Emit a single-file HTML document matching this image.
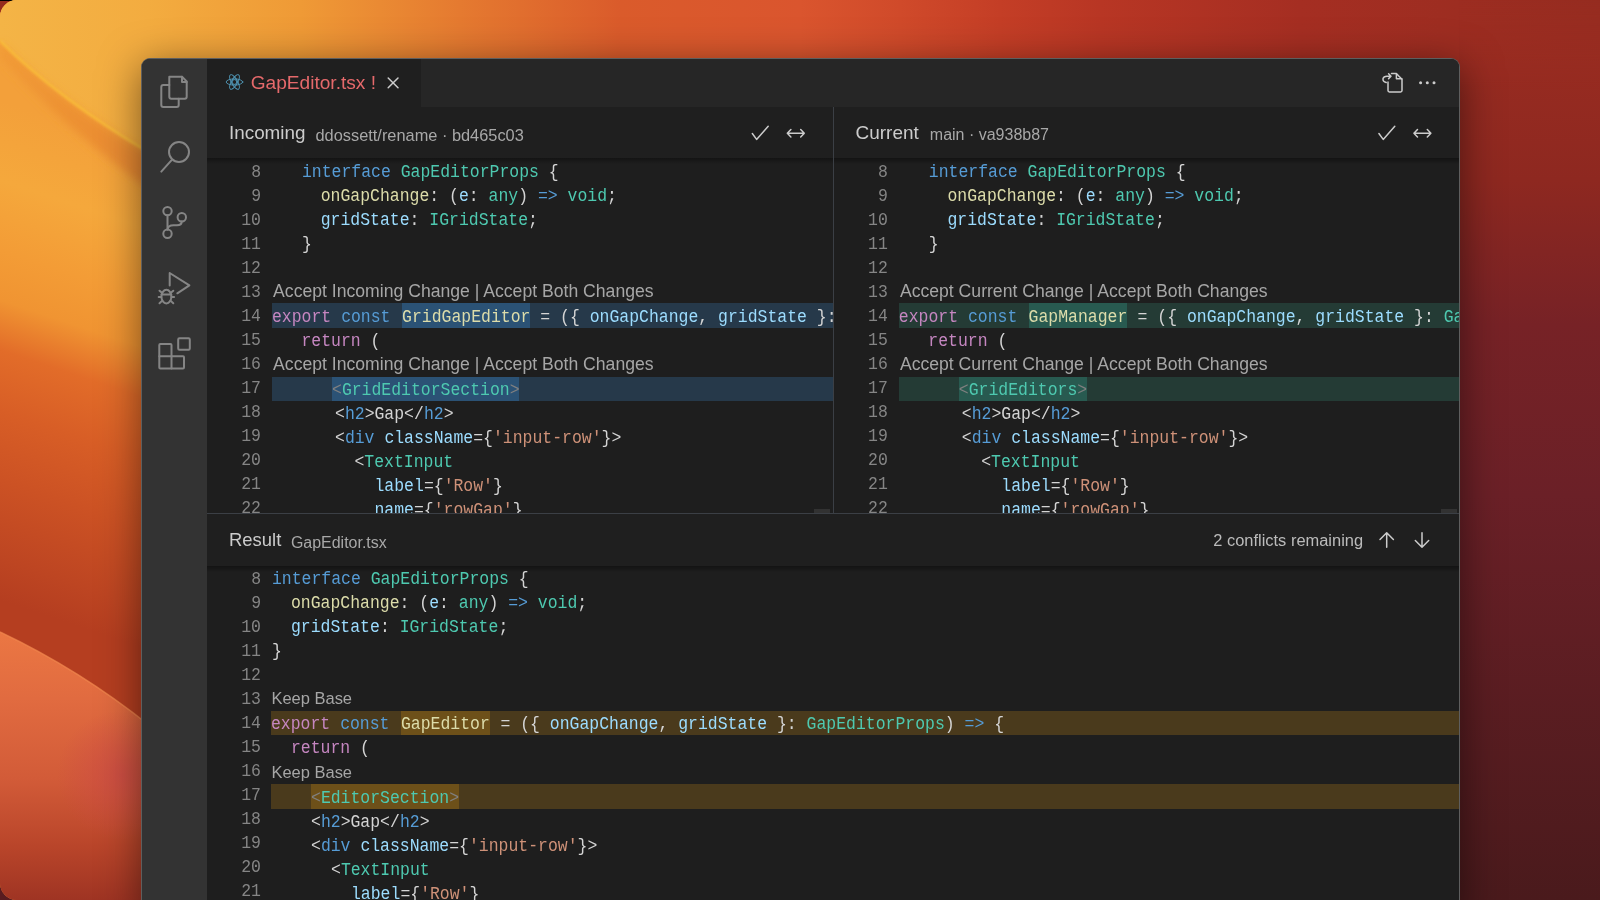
<!DOCTYPE html>
<html><head><meta charset="utf-8">
<style>
html,body{margin:0;padding:0;width:1600px;height:900px;overflow:hidden;background:#4d1a1c;}
*{box-sizing:border-box}
.wall{position:absolute;left:0;top:0;width:1600px;height:900px;border-radius:17px 0 0 17px;overflow:hidden;}
.win{position:absolute;left:141px;top:58px;width:1319px;height:860px;border:1px solid #5e5e5e;border-bottom:none;border-radius:9px 9px 0 0;overflow:hidden;background:#1e1e1e;box-shadow:0 8px 40px rgba(0,0,0,.5)}
.L{position:absolute;left:-142px;top:-59px;width:1600px;height:960px;will-change:transform}
.a{position:absolute}
.clip{position:absolute;overflow:hidden}
.mono{font-family:"Liberation Mono",monospace;font-size:16.47px;line-height:24px;white-space:pre;transform:scaleY(1.1);transform-origin:0 16px}
.ln{position:absolute;width:40px;text-align:right;color:#858585;font-family:"Liberation Mono",monospace;font-size:16.47px;line-height:24px;transform:scaleY(1.1);transform-origin:0 16px}
.tx{position:absolute;white-space:pre;font-family:"Liberation Sans",sans-serif;line-height:24px}
.k{color:#569cd6}.t{color:#4ec9b0}.f{color:#dcdcaa}.v{color:#9cdcfe}.p{color:#c586c0}.s{color:#ce9178}.w{color:#d4d4d4}.g{color:#808080}
</style></head><body>
<div class="a" style="left:0;top:0;width:40px;height:40px;background:#952b1d"></div><div class="a" style="left:0;top:0;width:17px;height:1px;background:#000"></div><div class="a" style="left:0;top:860px;width:40px;height:40px;background:#581c20"></div>
<div class="wall"><svg class="a" style="left:0;top:0" width="1600" height="900" viewBox="0 0 1600 900">
<defs>
 <linearGradient id="gtop" x1="0" y1="0" x2="1600" y2="0" gradientUnits="userSpaceOnUse">
  <stop offset="0" stop-color="#f4b446"/><stop offset="0.0875" stop-color="#f3ad40"/><stop offset="0.1875" stop-color="#ef9a36"/><stop offset="0.2875" stop-color="#e57a30"/>
  <stop offset="0.3875" stop-color="#da5b2b"/><stop offset="0.5" stop-color="#da552e"/><stop offset="0.5625" stop-color="#d04a2a"/><stop offset="0.625" stop-color="#c43e26"/>
  <stop offset="0.6875" stop-color="#b83624"/><stop offset="0.8125" stop-color="#a52e22"/><stop offset="1" stop-color="#962c20"/>
 </linearGradient>
 <linearGradient id="gleft" x1="150" y1="150" x2="0" y2="600" gradientUnits="userSpaceOnUse">
  <stop offset="0" stop-color="#f3a03a"/><stop offset="0.16" stop-color="#f5a83c"/><stop offset="0.3" stop-color="#f39c36"/><stop offset="0.4" stop-color="#f09432"/>
  <stop offset="0.5" stop-color="#e26c29"/><stop offset="0.62" stop-color="#d85e26"/><stop offset="0.76" stop-color="#cc5224"/><stop offset="0.92" stop-color="#bd4522"/><stop offset="1" stop-color="#b53e20"/>
 </linearGradient>
 <filter id="blur3" x="-20%" y="-20%" width="140%" height="140%"><feGaussianBlur stdDeviation="4"/></filter>
 <filter id="blur1" x="-20%" y="-20%" width="140%" height="140%"><feGaussianBlur stdDeviation="0.8"/></filter>
 <linearGradient id="gband" x1="0" y1="40" x2="141" y2="180" gradientUnits="userSpaceOnUse">
  <stop offset="0" stop-color="#f19a36"/><stop offset="1" stop-color="#e98930"/>
 </linearGradient>
 <linearGradient id="gw2" x1="0" y1="632" x2="0" y2="900" gradientUnits="userSpaceOnUse">
  <stop offset="0" stop-color="#eb7743"/><stop offset="0.25" stop-color="#e16b40"/><stop offset="0.55" stop-color="#d25b38"/><stop offset="0.8" stop-color="#b9452a"/><stop offset="1" stop-color="#9f3423"/>
 </linearGradient>
 <radialGradient id="gpink" cx="122" cy="775" r="65" gradientUnits="userSpaceOnUse">
  <stop offset="0" stop-color="#cc4a46" stop-opacity="0.75"/><stop offset="1" stop-color="#cc4a46" stop-opacity="0"/>
 </radialGradient>
 <linearGradient id="gyel" x1="0" y1="0" x2="150" y2="0" gradientUnits="userSpaceOnUse">
  <stop offset="0" stop-color="#f4b446"/><stop offset="1" stop-color="#f3ac40"/>
 </linearGradient>
 <linearGradient id="gmr" x1="0" y1="0" x2="0" y2="90" gradientUnits="userSpaceOnUse"><stop offset="0" stop-color="#000"/><stop offset="1" stop-color="#fff"/></linearGradient>
 <mask id="mright" maskUnits="userSpaceOnUse" x="0" y="0" width="1600" height="900"><rect x="1459" y="0" width="141" height="900" fill="url(#gmr)"/></mask>
 <linearGradient id="gright" x1="0" y1="0" x2="0" y2="900" gradientUnits="userSpaceOnUse">
  <stop offset="0" stop-color="#9c2d21"/><stop offset="0.2" stop-color="#8e2820"/><stop offset="0.36" stop-color="#772226"/><stop offset="0.55" stop-color="#6b2027"/><stop offset="1" stop-color="#4a1a1c"/>
 </linearGradient>
</defs>
<rect x="0" y="0" width="1600" height="900" fill="url(#gtop)"/>
<rect x="0" y="0" width="150" height="900" fill="url(#gleft)"/>
<path d="M0 0 H150 V153 Q60 100 0 41 Z" fill="url(#gyel)"/>
<g filter="url(#blur3)"><path d="M0 43 Q60 102 150 155 L150 190 Q60 125 0 56 Z" fill="url(#gband)"/></g>
<g filter="url(#blur1)"><path d="M0 41 Q60 100 150 153" stroke="#f8bc3a" stroke-width="2.5" fill="none" opacity="0.9"/></g>
<path d="M0 632 Q80 670 150 726 V900 H0 Z" fill="url(#gw2)"/>
<path d="M0 632 Q80 670 150 726 V900 H0 Z" fill="url(#gpink)"/>
<path d="M0 632 Q80 670 150 726" stroke="#f48a50" stroke-width="1.5" fill="none" opacity="0.7"/>
<rect x="1459" y="0" width="141" height="900" fill="url(#gright)" mask="url(#mright)"/>
</svg></div>
<div class="win"><div class="L">
  <div class="a" style="left:142px;top:59px;width:65px;height:900px;background:#333333"></div>
  <div class="a" style="left:207px;top:59px;width:1253px;height:48px;background:#262626"></div>
  <div class="a" style="left:207px;top:59px;width:213.5px;height:48px;background:#1f1f1f"></div>
  <div class="a" style="left:207px;top:107px;width:1253px;height:51px;background:#1f1f1f"></div>
  <div class="a" style="left:207px;top:514px;width:1253px;height:52px;background:#1f1f1f"></div>
  <svg class="a" style="left:0;top:0" width="1600" height="900" viewBox="0 0 1600 900" fill="none" stroke-linecap="round" stroke-linejoin="round">
<g stroke="#858585" stroke-width="2">
 <!-- files -->
 <path d="M169.3 76.7 H182 L186.7 81.4 V96.7 Q186.7 98.7 184.7 98.7 H171.3 Q169.3 98.7 169.3 96.7 Z"/>
 <path d="M182 76.7 V82 H186.7"/>
 <path d="M169.3 85 H163.3 Q161.3 85 161.3 87 V105 Q161.3 107 163.3 107 H176.7 Q178.7 107 178.7 105 V98.7"/>
 <!-- search -->
 <circle cx="179" cy="152" r="10"/>
 <path d="M171.6 160.2 L161.3 171.6"/>
 <!-- scm -->
 <circle cx="167.5" cy="211.1" r="4.2"/>
 <circle cx="167.5" cy="233.8" r="4.2"/>
 <circle cx="181.8" cy="217.2" r="4.2"/>
 <path d="M167.5 215.3 V229.6"/>
 <path d="M181.8 221.4 Q181.6 225.3 177 225.3 H173.5 Q168 225.3 167.5 229.6"/>
 <!-- debug -->
 <path d="M169.7 285.6 V273 L189.4 285.3 L177.3 293.3"/>
 <ellipse cx="166.4" cy="296.6" rx="5" ry="6.8"/>
 <path d="M161.6 294.6 H171.2"/>
 <path d="M159.5 290.7 L162.3 293.1 M173.3 290.7 L170.5 293.1 M158.7 297 H161.3 M174.1 297 H171.5 M159.5 303.3 L162.3 300.6 M173.3 303.3 L170.5 300.6"/>
 <!-- extensions -->
 <rect x="178.2" y="338.2" width="11.6" height="11.6" rx="1.2"/>
 <path d="M159.3 345 Q159.3 344 160.3 344 H170.5 Q171.5 344 171.5 345 V356.2 H183 Q184 356.2 184 357.2 V367.4 Q184 368.4 183 368.4 H160.3 Q159.3 368.4 159.3 367.4 Z"/>
 <path d="M159.3 356.2 H171.5 V368.4"/>
</g>
<g stroke="#cccccc" stroke-width="1.5">
 <!-- close -->
 <path d="M388.2 78 L398 87.8 M398 78 L388.2 87.8"/>
 <!-- check incoming -->
 <path d="M752.3 133.5 L756.6 139.4 L768.2 126.3"/>
 <path d="M787.3 133.3 H804.3 M790.9 129.6 L787.3 133.3 L790.9 137 M800.7 129.6 L804.3 133.3 L800.7 137"/>
 <!-- check current -->
 <path d="M1378.9 133.5 L1383.2 139.4 L1394.8 126.3"/>
 <path d="M1413.9 133.3 H1430.9 M1417.5 129.6 L1413.9 133.3 L1417.5 137 M1427.3 129.6 L1430.9 133.3 L1427.3 137"/>
 <!-- up / down -->
 <path d="M1386.7 532.8 V547.2 M1380 539.5 L1386.7 532.8 L1393.4 539.5"/>
 <path d="M1422 532.8 V547.2 M1415.3 540.5 L1422 547.2 L1428.7 540.5"/>
 <!-- open file -->
 <path d="M1391.5 73.6 H1396.4 L1402 79.2 V90.6 Q1402 92 1400.6 92 H1389.4 Q1388 92 1388 90.6 V82"/>
 <path d="M1396.4 73.8 V78.8 H1401.8"/>
 <path d="M1386.2 82.5 Q1382.6 81.5 1383 78.6 Q1383.6 76.2 1387 76.2 H1391 M1388.6 73.8 L1391 76.2 L1388.6 78.6"/>
</g>
<g fill="#cccccc"><circle cx="1420.6" cy="82.7" r="1.5"/><circle cx="1427.3" cy="82.7" r="1.5"/><circle cx="1434" cy="82.7" r="1.5"/></g>
<g stroke="#519aba" stroke-width="0.9" fill="none">
 <ellipse cx="234.5" cy="82" rx="8.3" ry="3.1"/>
 <ellipse cx="234.5" cy="82" rx="8.3" ry="3.1" transform="rotate(60 234.5 82)"/>
 <ellipse cx="234.5" cy="82" rx="8.3" ry="3.1" transform="rotate(-60 234.5 82)"/>
 <circle cx="234.5" cy="82" r="2.4"/>
</g>
</svg>
  <div class="tx" style="left:250.70px;top:70.70px;font-size:19.13px;color:#e5696b;">GapEditor.tsx !</div>
<div class="tx" style="left:229.00px;top:121.00px;font-size:18.85px;color:#cccccc;">Incoming</div>
<div class="tx" style="left:315.50px;top:122.50px;font-size:16.38px;color:#a8a8a8;">ddossett/rename · bd465c03</div>
<div class="tx" style="left:855.50px;top:120.90px;font-size:18.98px;color:#cccccc;">Current</div>
<div class="tx" style="left:929.80px;top:123.30px;font-size:16.0px;color:#a8a8a8;">main · va938b87</div>
<div class="tx" style="left:229.00px;top:528.30px;font-size:18.45px;color:#cccccc;">Result</div>
<div class="tx" style="left:290.90px;top:530.90px;font-size:15.97px;color:#a8a8a8;">GapEditor.tsx</div>
<div class="tx" style="left:1213.25px;top:527.50px;font-size:16.46px;color:#bbbbbb;">2 conflicts remaining</div>
  <div class="clip" style="left:207px;top:158px;width:626px;height:355px;background:#1e1e1e"><div class="a" style="left:-207px;top:-158px;width:1600px;height:900px">
<div class="a" style="left:272px;top:303.3px;width:700px;height:24.5px;background:#26394a"></div>
<div class="a" style="left:401.9px;top:303.3px;width:128.31px;height:24.5px;background:#2b5275"></div>
<div class="a" style="left:272px;top:376.9px;width:700px;height:24.4px;background:#26394a"></div>
<div class="a" style="left:331.8px;top:376.9px;width:187.53px;height:24.4px;background:#2b5275"></div>
<div class="ln" style="left:221px;top:160.8px">8</div>
<div class="ln" style="left:221px;top:184.8px">9</div>
<div class="ln" style="left:221px;top:208.8px">10</div>
<div class="ln" style="left:221px;top:232.8px">11</div>
<div class="ln" style="left:221px;top:256.8px">12</div>
<div class="ln" style="left:221px;top:280.8px">13</div>
<div class="ln" style="left:221px;top:304.8px">14</div>
<div class="ln" style="left:221px;top:328.8px">15</div>
<div class="ln" style="left:221px;top:352.8px">16</div>
<div class="ln" style="left:221px;top:376.8px">17</div>
<div class="ln" style="left:221px;top:400.8px">18</div>
<div class="ln" style="left:221px;top:424.8px">19</div>
<div class="ln" style="left:221px;top:448.8px">20</div>
<div class="ln" style="left:221px;top:472.8px">21</div>
<div class="ln" style="left:221px;top:496.8px">22</div>
<div class="a mono" style="left:302px;top:160.80px"><span class="k">interface</span><span class="w"> </span><span class="t">GapEditorProps</span><span class="w"> {</span></div>
<div class="a mono" style="left:320.7px;top:184.80px"><span class="f">onGapChange</span><span class="w">: (</span><span class="v">e</span><span class="w">: </span><span class="t">any</span><span class="w">) </span><span class="k">=&gt;</span><span class="w"> </span><span class="t">void</span><span class="w">;</span></div>
<div class="a mono" style="left:320.7px;top:208.80px"><span class="v">gridState</span><span class="w">: </span><span class="t">IGridState</span><span class="w">;</span></div>
<div class="a mono" style="left:302px;top:232.80px"><span class="w">}</span></div>
<div class="a mono" style="left:272px;top:305.60px"><span class="p">export</span><span class="w"> </span><span class="k">const</span><span class="w"> </span></div>
<div class="a mono" style="left:301.5px;top:329.60px"><span class="p">return</span><span class="w"> (</span></div>
<div class="a mono" style="left:332px;top:379.40px"><span class="g">&lt;</span><span class="t">GridEditorSection</span><span class="g">&gt;</span></div>
<div class="a mono" style="left:335px;top:403.40px"><span class="w">&lt;</span><span class="k">h2</span><span class="w">&gt;Gap&lt;/</span><span class="k">h2</span><span class="w">&gt;</span></div>
<div class="a mono" style="left:335px;top:427.40px"><span class="w">&lt;</span><span class="k">div</span><span class="w"> </span><span class="v">className</span><span class="w">={</span><span class="s">'input-row'</span><span class="w">}&gt;</span></div>
<div class="a mono" style="left:354.4px;top:451.40px"><span class="w">&lt;</span><span class="t">TextInput</span></div>
<div class="a mono" style="left:374.5px;top:475.40px"><span class="v">label</span><span class="w">={</span><span class="s">'Row'</span><span class="w">}</span></div>
<div class="a mono" style="left:374.5px;top:499.40px"><span class="v">name</span><span class="w">={</span><span class="s">'rowGap'</span><span class="w">}</span></div>
<div class="a mono" style="left:402.10px;top:305.60px"><span class="f">GridGapEditor</span></div>
<div class="a mono" style="left:530.51px;top:305.60px"><span class="w"> = ({ </span><span class="v">onGapChange</span><span class="w">, </span><span class="v">gridState</span><span class="w"> }: </span><span class="t">GapEditorProps</span><span class="w">) </span><span class="k">=&gt;</span><span class="w"> {</span></div>
<div class="tx" style="left:273.10px;top:278.75px;font-size:17.61px;color:#a6a6a6">Accept Incoming Change | Accept Both Changes</div>
<div class="tx" style="left:273.10px;top:351.50px;font-size:17.61px;color:#a6a6a6">Accept Incoming Change | Accept Both Changes</div>
  </div><div class="a" style="left:0;top:0;width:100%;height:6px;background:linear-gradient(rgba(0,0,0,.35),rgba(0,0,0,0))"></div></div>
  <div class="clip" style="left:834px;top:158px;width:626px;height:355px;background:#1e1e1e"><div class="a" style="left:-834px;top:-158px;width:1600px;height:900px">
<div class="a" style="left:898.8px;top:303.3px;width:700px;height:24.5px;background:#243b35"></div>
<div class="a" style="left:1028.6999999999998px;top:303.3px;width:98.70px;height:24.5px;background:#285a50"></div>
<div class="a" style="left:898.8px;top:376.9px;width:700px;height:24.4px;background:#243b35"></div>
<div class="a" style="left:958.5999999999999px;top:376.9px;width:128.31px;height:24.4px;background:#285a50"></div>
<div class="ln" style="left:847.8px;top:160.8px">8</div>
<div class="ln" style="left:847.8px;top:184.8px">9</div>
<div class="ln" style="left:847.8px;top:208.8px">10</div>
<div class="ln" style="left:847.8px;top:232.8px">11</div>
<div class="ln" style="left:847.8px;top:256.8px">12</div>
<div class="ln" style="left:847.8px;top:280.8px">13</div>
<div class="ln" style="left:847.8px;top:304.8px">14</div>
<div class="ln" style="left:847.8px;top:328.8px">15</div>
<div class="ln" style="left:847.8px;top:352.8px">16</div>
<div class="ln" style="left:847.8px;top:376.8px">17</div>
<div class="ln" style="left:847.8px;top:400.8px">18</div>
<div class="ln" style="left:847.8px;top:424.8px">19</div>
<div class="ln" style="left:847.8px;top:448.8px">20</div>
<div class="ln" style="left:847.8px;top:472.8px">21</div>
<div class="ln" style="left:847.8px;top:496.8px">22</div>
<div class="a mono" style="left:928.8px;top:160.80px"><span class="k">interface</span><span class="w"> </span><span class="t">GapEditorProps</span><span class="w"> {</span></div>
<div class="a mono" style="left:947.5px;top:184.80px"><span class="f">onGapChange</span><span class="w">: (</span><span class="v">e</span><span class="w">: </span><span class="t">any</span><span class="w">) </span><span class="k">=&gt;</span><span class="w"> </span><span class="t">void</span><span class="w">;</span></div>
<div class="a mono" style="left:947.5px;top:208.80px"><span class="v">gridState</span><span class="w">: </span><span class="t">IGridState</span><span class="w">;</span></div>
<div class="a mono" style="left:928.8px;top:232.80px"><span class="w">}</span></div>
<div class="a mono" style="left:898.8px;top:305.60px"><span class="p">export</span><span class="w"> </span><span class="k">const</span><span class="w"> </span></div>
<div class="a mono" style="left:928.3px;top:329.60px"><span class="p">return</span><span class="w"> (</span></div>
<div class="a mono" style="left:958.8px;top:379.40px"><span class="g">&lt;</span><span class="t">GridEditors</span><span class="g">&gt;</span></div>
<div class="a mono" style="left:961.8px;top:403.40px"><span class="w">&lt;</span><span class="k">h2</span><span class="w">&gt;Gap&lt;/</span><span class="k">h2</span><span class="w">&gt;</span></div>
<div class="a mono" style="left:961.8px;top:427.40px"><span class="w">&lt;</span><span class="k">div</span><span class="w"> </span><span class="v">className</span><span class="w">={</span><span class="s">'input-row'</span><span class="w">}&gt;</span></div>
<div class="a mono" style="left:981.1999999999999px;top:451.40px"><span class="w">&lt;</span><span class="t">TextInput</span></div>
<div class="a mono" style="left:1001.3px;top:475.40px"><span class="v">label</span><span class="w">={</span><span class="s">'Row'</span><span class="w">}</span></div>
<div class="a mono" style="left:1001.3px;top:499.40px"><span class="v">name</span><span class="w">={</span><span class="s">'rowGap'</span><span class="w">}</span></div>
<div class="a mono" style="left:1028.60px;top:305.60px"><span class="f">GapManager</span></div>
<div class="a mono" style="left:1127.70px;top:305.60px"><span class="w"> = ({ </span><span class="v">onGapChange</span><span class="w">, </span><span class="v">gridState</span><span class="w"> }: </span><span class="t">GapEditorProps</span><span class="w">) </span><span class="k">=&gt;</span><span class="w"> {</span></div>
<div class="tx" style="left:899.90px;top:278.75px;font-size:17.61px;color:#a6a6a6">Accept Current Change | Accept Both Changes</div>
<div class="tx" style="left:899.90px;top:351.50px;font-size:17.61px;color:#a6a6a6">Accept Current Change | Accept Both Changes</div>
  </div><div class="a" style="left:0;top:0;width:100%;height:6px;background:linear-gradient(rgba(0,0,0,.35),rgba(0,0,0,0))"></div></div>
  <div class="clip" style="left:207px;top:566px;width:1253px;height:400px;background:#1e1e1e"><div class="a" style="left:-207px;top:-566px;width:1600px;height:900px">
<div class="a" style="left:271px;top:711.1px;width:1200px;height:24px;background:#4a3a1c"></div>
<div class="a" style="left:401px;top:711.1px;width:89.3px;height:24px;background:#6d5019"></div>
<div class="a" style="left:271px;top:784.3px;width:1200px;height:24.4px;background:#4a3a1c"></div>
<div class="a" style="left:311px;top:784.3px;width:148.05px;height:24.4px;background:#6d5019"></div>
<div class="ln" style="left:221px;top:568.2px">8</div>
<div class="ln" style="left:221px;top:592.2px">9</div>
<div class="ln" style="left:221px;top:616.2px">10</div>
<div class="ln" style="left:221px;top:640.2px">11</div>
<div class="ln" style="left:221px;top:664.2px">12</div>
<div class="ln" style="left:221px;top:688.2px">13</div>
<div class="ln" style="left:221px;top:712.2px">14</div>
<div class="ln" style="left:221px;top:736.2px">15</div>
<div class="ln" style="left:221px;top:760.2px">16</div>
<div class="ln" style="left:221px;top:784.2px">17</div>
<div class="ln" style="left:221px;top:808.2px">18</div>
<div class="ln" style="left:221px;top:832.2px">19</div>
<div class="ln" style="left:221px;top:856.2px">20</div>
<div class="ln" style="left:221px;top:880.2px">21</div>
<div class="a mono" style="left:272px;top:568.20px"><span class="k">interface</span><span class="w"> </span><span class="t">GapEditorProps</span><span class="w"> {</span></div>
<div class="a mono" style="left:291px;top:592.20px"><span class="f">onGapChange</span><span class="w">: (</span><span class="v">e</span><span class="w">: </span><span class="t">any</span><span class="w">) </span><span class="k">=&gt;</span><span class="w"> </span><span class="t">void</span><span class="w">;</span></div>
<div class="a mono" style="left:291px;top:616.20px"><span class="v">gridState</span><span class="w">: </span><span class="t">IGridState</span><span class="w">;</span></div>
<div class="a mono" style="left:272px;top:640.20px"><span class="w">}</span></div>
<div class="a mono" style="left:271px;top:713.00px"><span class="p">export</span><span class="w"> </span><span class="k">const</span><span class="w"> </span></div>
<div class="a mono" style="left:291px;top:737.00px"><span class="p">return</span><span class="w"> (</span></div>
<div class="a mono" style="left:311px;top:786.80px"><span class="g">&lt;</span><span class="t">EditorSection</span><span class="g">&gt;</span></div>
<div class="a mono" style="left:311px;top:810.80px"><span class="w">&lt;</span><span class="k">h2</span><span class="w">&gt;Gap&lt;/</span><span class="k">h2</span><span class="w">&gt;</span></div>
<div class="a mono" style="left:311px;top:834.80px"><span class="w">&lt;</span><span class="k">div</span><span class="w"> </span><span class="v">className</span><span class="w">={</span><span class="s">'input-row'</span><span class="w">}&gt;</span></div>
<div class="a mono" style="left:331px;top:858.80px"><span class="w">&lt;</span><span class="t">TextInput</span></div>
<div class="a mono" style="left:351px;top:882.80px"><span class="v">label</span><span class="w">={</span><span class="s">'Row'</span><span class="w">}</span></div>
<div class="a mono" style="left:400.9px;top:713.00px"><span class="f">GapEditor</span></div>
<div class="a mono" style="left:490.6px;top:713.00px"><span class="w"> = ({ </span><span class="v">onGapChange</span><span class="w">, </span><span class="v">gridState</span><span class="w"> }: </span><span class="t">GapEditorProps</span><span class="w">) </span><span class="k">=&gt;</span><span class="w"> {</span></div>
<div class="tx" style="left:271.4px;top:685.75px;font-size:16.49px;color:#a6a6a6">Keep Base</div>
<div class="tx" style="left:271.4px;top:759.50px;font-size:16.49px;color:#a6a6a6">Keep Base</div>
  </div><div class="a" style="left:0;top:0;width:100%;height:6px;background:linear-gradient(rgba(0,0,0,.35),rgba(0,0,0,0))"></div></div>
  <div class="a" style="left:814px;top:509px;width:16px;height:4px;background:#323232"></div>
  <div class="a" style="left:1441px;top:509px;width:16px;height:4px;background:#323232"></div>
  <div class="a" style="left:833px;top:107px;width:1px;height:406px;background:#3b3f45"></div>
  <div class="a" style="left:207px;top:513px;width:1253px;height:1px;background:#3b3f45"></div>
</div></div>
</body></html>
